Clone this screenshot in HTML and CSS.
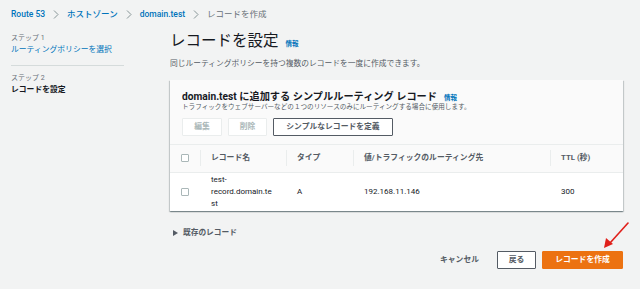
FILE: index.html
```html
<!DOCTYPE html>
<html lang="ja">
<head>
<meta charset="utf-8">
<title>レコードを作成</title>
<link rel="stylesheet" href="styles.css">
</head>
<body>
<div class="page">
  <nav class="crumbs">
    <a class="crumb-link">Route 53</a>
    <svg class="sep" width="6" height="9" viewBox="0 0 6 9"><polyline points="1,0.5 5,4.5 1,8.5" fill="none" stroke="#879596" stroke-width="1"/></svg>
    <a class="crumb-link">ホストゾーン</a>
    <svg class="sep" width="6" height="9" viewBox="0 0 6 9"><polyline points="1,0.5 5,4.5 1,8.5" fill="none" stroke="#879596" stroke-width="1"/></svg>
    <a class="crumb-link">domain.test</a>
    <svg class="sep" width="6" height="9" viewBox="0 0 6 9"><polyline points="1,0.5 5,4.5 1,8.5" fill="none" stroke="#879596" stroke-width="1"/></svg>
    <span class="crumb-current">レコードを作成</span>
  </nav>

  <div class="layout">
    <aside class="steps">
      <div class="step step-first">
        <div class="step-no">ステップ 1</div>
        <a class="step-link">ルーティングポリシーを選択</a>
      </div>
      <div class="step">
        <div class="step-no">ステップ 2</div>
        <div class="step-current">レコードを設定</div>
      </div>
    </aside>

    <main class="main">
      <div class="title-row">
        <h1 class="title">レコードを設定</h1>
        <a class="info info-title">情報</a>
      </div>
      <p class="lead">同じルーティングポリシーを持つ複数のレコードを一度に作成できます。</p>

      <section class="card">
        <div class="card-head">
          <div class="card-title-row">
            <h2 class="card-title">domain.test に追加する シンプルルーティング レコード</h2>
            <a class="info info-card">情報</a>
          </div>
          <p class="card-desc">トラフィックをウェブサーバーなどの１つのリソースのみにルーティングする場合に使用します。</p>
          <div class="actions">
            <button class="btn btn-disabled btn-edit">編集</button>
            <button class="btn btn-disabled btn-delete">削除</button>
            <button class="btn btn-normal">シンプルなレコードを定義</button>
          </div>
        </div>
        <div class="table">
          <div class="row row-head">
            <div class="hcell hcell-check"><span class="checkbox"></span></div>
            <div class="hcell">レコード名</div>
            <div class="hcell">タイプ</div>
            <div class="hcell">値/トラフィックのルーティング先</div>
            <div class="hcell">TTL (秒)</div>
          </div>
          <div class="row row-body">
            <div class="cell cell-check"><span class="checkbox"></span></div>
            <div class="cell cell-name">test-<br>record.domain.te<br>st</div>
            <div class="cell">A</div>
            <div class="cell">192.168.11.146</div>
            <div class="cell">300</div>
          </div>
        </div>
      </section>

      <div class="expander">
        <svg class="caret" width="5" height="6" viewBox="0 0 5 6"><polygon points="0,0 5,3 0,6" fill="#545b64"/></svg>
        <span>既存のレコード</span>
      </div>

      <div class="footer">
        <button class="btn btn-link">キャンセル</button>
        <button class="btn btn-normal btn-back">戻る</button>
        <button class="btn btn-primary">レコードを作成</button>
      </div>
    </main>
  </div>

  <svg class="arrow" width="40" height="40" viewBox="0 0 40 40">
    <line x1="28" y1="3" x2="10" y2="23" stroke="#e0201b" stroke-width="1.6" stroke-linecap="round"/>
    <polygon points="4,28 6,18 13,24" fill="#e0201b"/>
  </svg>
</div>
</body>
</html>
```

FILE: styles.css
```css
* { box-sizing: border-box; }

html, body {
  margin: 0;
  padding: 0;
  width: 640px;
  height: 289px;
  overflow: hidden;
  background: #f2f3f3;
}

body {
  font-family: Roboto, "Noto Sans CJK JP", sans-serif;
  color: #16191f;
}

.page {
  position: relative;
  width: 640px;
  height: 289px;
}

a { color: #0073bb; text-decoration: none; }

/* breadcrumbs */
.crumbs {
  display: flex;
  align-items: center;
  height: 28px;
  padding: 0 0 0 11px;
  font-size: 8.5px;
  line-height: 12px;
  padding-bottom: 0;
}
.crumb-link { color: #0073bb; font-weight: 500; }
.sep { margin: 0 8px 0 8px; }
.crumb-current { color: #687078; }

/* layout */
.layout {
  display: flex;
  gap: 46px;
}

.steps {
  width: 124px;
  flex: none;
  padding: 5px 0 0 11px;
}
.step-first {
  padding-bottom: 9px;
  border-bottom: 1px solid #d5dbdb;
  margin-bottom: 7px;
}
.step-no {
  font-size: 7px;
  line-height: 11px;
  color: #687078;
}
.step-link {
  display: block;
  font-size: 7.8px;
  line-height: 12px;
}
.step-current {
  font-size: 7.8px;
  line-height: 12px;
  font-weight: 700;
}

.main {
  width: 453px;
  flex: none;
  padding-top: 2px;
}

.title-row {
  display: flex;
  align-items: baseline;
}
.title {
  margin: 0;
  font-size: 15.5px;
  line-height: 22px;
  font-weight: 400;
  color: #16191f;
}
.info {
  font-weight: 700;
  color: #0073bb;
}
.info-title {
  font-size: 6.5px;
  margin-left: 7px;
}
.lead {
  margin: 6px 0 0;
  font-size: 7.75px;
  line-height: 12px;
  color: #545b64;
}

/* card */
.card {
  margin-top: 10px;
  background: #fafafa;
  box-shadow: 0 1px 1px 0 rgba(0, 28, 36, 0.3), 1px 1px 1px 0 rgba(0, 28, 36, 0.15), -1px 1px 1px 0 rgba(0, 28, 36, 0.15);
}
.card-head {
  padding: 10px 12px 8px;
}
.card-title-row {
  display: flex;
  align-items: baseline;
}
.card-title {
  margin: 0;
  font-size: 10.2px;
  line-height: 13px;
  font-weight: 700;
  color: #16191f;
}
.info-card {
  font-size: 6.5px;
  margin-left: 7px;
}
.card-desc {
  margin: 0;
  font-size: 6.6px;
  line-height: 9px;
  color: #545b64;
}
.actions {
  display: flex;
  gap: 6px;
  margin-top: 5.5px;
}

.btn {
  font-family: inherit;
  height: 18px;
  padding: 0 12px;
  font-size: 7.8px;
  font-weight: 700;
  line-height: 16px;
  border-radius: 1px;
  background: #ffffff;
  cursor: pointer;
}
.btn-disabled {
  color: #aab7b8;
  border: 1px solid #eaeded;
  background: #ffffff;
}
.btn-edit { width: 40px; padding: 0; }
.btn-delete { width: 39px; padding: 0; }
.btn-normal {
  color: #545b64;
  border: 1px solid #545b64;
}
.actions .btn-normal { width: 120px; padding: 0; }

/* table */
.row {
  display: grid;
  grid-template-columns: 30px 86px 67px 197px 1fr;
  border-top: 1px solid #eaeded;
}
.row-head {
  height: 28px;
  align-items: center;
  background: #fafafa;
}
.hcell {
  height: 16px;
  line-height: 16px;
  font-size: 7.8px;
  font-weight: 700;
  color: #545b64;
  padding-left: 10px;
  border-left: 1px solid #eaeded;
}
.hcell-check {
  border-left: none;
  padding-left: 11px;
  display: flex;
  align-items: center;
}
.row-body {
  background: #ffffff;
  min-height: 39px;
  align-items: center;
}
.cell {
  font-size: 8px;
  line-height: 12px;
  color: #16191f;
  padding-left: 11px;
}
.cell-check {
  display: flex;
  align-items: center;
}
.cell-name {
  padding-top: 1px;
  padding-bottom: 1px;
}
.checkbox {
  display: block;
  width: 8px;
  height: 8px;
  border: 1px solid #aab7b8;
  border-radius: 1px;
  background: #ffffff;
}

/* expander */
.expander {
  display: flex;
  align-items: center;
  margin-top: 16px;
  padding-left: 3px;
  font-size: 7.7px;
  line-height: 12px;
  font-weight: 700;
  color: #545b64;
}
.caret { margin-right: 5px; }

/* footer */
.footer {
  display: flex;
  justify-content: flex-end;
  align-items: center;
  gap: 6px;
  margin-top: 12px;
}
.btn-link {
  border: none;
  background: transparent;
  color: #545b64;
  padding: 0 12px 0 0;
  margin-right: 0;
}
.btn-back { width: 39px; padding: 0; }
.btn-primary {
  width: 81px;
  padding: 0;
  color: #ffffff;
  background: #ec7211;
  border: 1px solid #ec7211;
}

/* annotation arrow */
.arrow {
  position: absolute;
  left: 600px;
  top: 220px;
}
```
